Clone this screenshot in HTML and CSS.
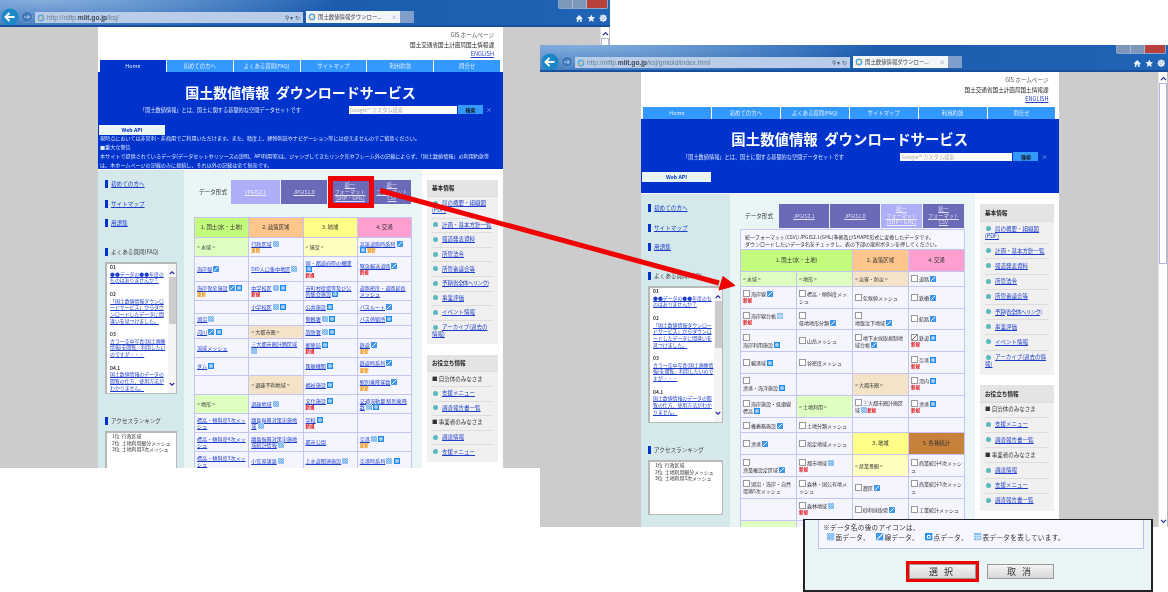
FILE: index.html
```html
<!DOCTYPE html>
<html lang="ja">
<head>
    <meta charset="UTF-8">
    <title>国土数値情報 ダウンロードサービス</title>
    <link rel="stylesheet" href="styles.css">
</head>
<body>
    <svg class="defs" width="0" height="0">
        <symbol id="i-a" viewBox="0 0 8 8"><rect width="8" height="8" fill="#6fb1ee"/><path d="M0 2L2 0M0 5L5 0M0 8L8 0M3 8L8 3M6 8L8 6" stroke="#d8ecff" stroke-width="1"/></symbol>
        <symbol id="i-l" viewBox="0 0 8 8"><rect width="8" height="8" fill="#3f97ea"/><path d="M1 7L7 1" stroke="#fff" stroke-width="1.2"/></symbol>
        <symbol id="i-p" viewBox="0 0 8 8"><rect width="8" height="8" fill="#1f8df0"/><rect x="2" y="2" width="4" height="4" fill="#fff"/><rect x="3.2" y="3.2" width="1.6" height="1.6" fill="#1f6fd0"/></symbol>
        <symbol id="i-t" viewBox="0 0 8 8"><rect width="8" height="8" fill="#7fbcf0"/><path d="M0 2.5H8M0 5H8M3 2.5V8M5.5 2.5V8" stroke="#e4f2ff" stroke-width=".8"/></symbol>
        <symbol id="chev-up" viewBox="0 0 8 6"><path d="M1 5L4 2L7 5" fill="none" stroke="#2a2a9a" stroke-width="1.5"/></symbol>
        <symbol id="chev-down" viewBox="0 0 8 6"><path d="M1 1L4 4L7 1" fill="none" stroke="#2a2a9a" stroke-width="1.5"/></symbol>
        <symbol id="i-back" viewBox="0 0 18 18"><circle cx="9" cy="9" r="8.5" fill="#1a87c6"/><path d="M13.5 9H5M8.5 5L4.5 9L8.5 13" fill="none" stroke="#fff" stroke-width="2"/></symbol>
        <symbol id="i-fwd" viewBox="0 0 12 12"><circle cx="6" cy="6" r="5.5" fill="#3f78ba" stroke="#86a8d4" stroke-width=".7"/><path d="M3 6H8.5M6.5 4L8.5 6L6.5 8" fill="none" stroke="#b8d0ec" stroke-width="1"/></symbol>
        <symbol id="i-ie" viewBox="0 0 9 9"><circle cx="4.5" cy="4.5" r="3" fill="none" stroke="#4fa8e8" stroke-width="1.6"/><path d="M.5 7.5C3 7 7 3.5 8.5 1" fill="none" stroke="#eeb53c" stroke-width="1"/></symbol>
        <symbol id="i-home" viewBox="0 0 9 9"><path d="M4.5 1L8.5 5H7V8.5H5.4V6H3.6V8.5H2V5H.5Z" fill="#e8f0fa"/></symbol>
        <symbol id="i-star" viewBox="0 0 9 9"><path d="M4.5.5L5.7 3.3L8.7 3.5L6.4 5.4L7.1 8.4L4.5 6.8L1.9 8.4L2.6 5.4L.3 3.5L3.3 3.3Z" fill="#e8f0fa"/></symbol>
        <symbol id="i-gear" viewBox="0 0 9 9"><circle cx="4.5" cy="4.5" r="2.6" fill="none" stroke="#e8f0fa" stroke-width="1.6"/><path d="M4.5 .3V8.7M.3 4.5H8.7M1.5 1.5L7.5 7.5M7.5 1.5L1.5 7.5" stroke="#e8f0fa" stroke-width=".9"/></symbol>
    </svg>

    <!-- 奥のウィンドウ -->
    <section class="window win-a">
        <div class="chrome">
            <svg class="btn-back"><use href="#i-back"/></svg>
            <svg class="btn-fwd"><use href="#i-fwd"/></svg>
            <div class="address">
                <svg class="ie-icon"><use href="#i-ie"/></svg>
                <span class="url">http://nlftp.<b>mlit.go.jp</b>/ksj/</span>
                <span class="addr-tools">⚲ ▾ ↻</span>
            </div>
            <div class="tab-active"><svg class="ie-icon"><use href="#i-ie"/></svg><span>国土数値情報ダウンロー...</span><i>×</i></div>
            <div class="tab-new"></div>
            <div class="tools">
                <svg><use href="#i-home"/></svg><svg><use href="#i-star"/></svg><svg><use href="#i-gear"/></svg>
            </div>
            <div class="win-controls"><span></span><span></span><span class="close"></span></div>
        </div>
        <div class="viewport">
            <div class="gutter gutter-left"></div>
            <div class="page">
                <header class="page-head">
                    <div>GIS ホームページ</div>
                    <div class="dark">国土交通省国土計画局国土情報課</div>
                    <div><a href="#">ENGLISH</a></div>
                </header>
                <nav class="site-nav">
                    <span class="on">Home</span><span>初めての方へ</span><span>よくある質問(FAQ)</span><span>サイトマップ</span><span>利用約款</span><span>問合せ</span>
                </nav>
                <div class="banner">
                    <h1>国土数値情報&nbsp; ダウンロードサービス</h1>
                    <div class="banner-row">
                        <p>「国土数値情報」とは、国土に関する基礎的な空間データセットです</p>
                        <div class="search"><span class="search-box">Google™ カスタム検索</span><span class="search-btn">検索</span><span class="search-x">×</span></div>
                    </div>
                    <div class="webapi">Web API</div>
                    <div class="notice">
                        <div>現時点においては非営利・非商用でご利用いただけます。また、精度上、建物判読やナビゲーション等には使えませんのでご留意ください。</div>
                        <div>■重大な警告</div>
                        <div>本サイトで提供されているデータ(データセットやリソースの説明、API利用等)は、ジャンプしてきたリンク先やフレーム外の記載によらず、「国土数値情報」の利用約款等</div>
                        <div>は、本ホームページの記載のみに接続し、それ以外の記載は全て無効です。</div>
                    </div>
                </div>
                <div class="page-body">
                    <aside class="side">
                        <a class="side-link" href="#">初めての方へ</a>
                        <a class="side-link" href="#">サイトマップ</a>
                        <a class="side-link" href="#">用語集</a>
                        <div class="side-head">よくある質問(FAQ)</div>
                        <div class="faq">
                            <div class="faq-text">
                                <b>01</b><br><a href="#">●●データの●●年度のものはありませんか？</a><br><br>
                                <b>02</b><br><a href="#">「国土数値情報ダウンロードサービス」からダウンロードしたデータに間違いを見つけました。</a><br><br>
                                <b>03</b><br><a href="#">カラー空中写真(国土画像情報)を閲覧／利用したいのですが・・・</a><br><br>
                                <b>04.1</b><br><a href="#">国土数値情報のデータの閲覧の仕方、使用方法がわかりません。</a>
                            </div>
                            <div class="faq-scroll">
                                <svg><use href="#chev-up"/></svg><div class="faq-thumb"></div><svg><use href="#chev-down"/></svg>
                            </div>
                        </div>
                        <div class="side-head rank-head">アクセスランキング</div>
                        <div class="rank">
                            <div>1位&nbsp; 行政区域</div>
                            <div>2位&nbsp; 土地利用細分メッシュ</div>
                            <div>3位&nbsp; 土地利用3次メッシュ</div>
                        </div>
                    </aside>
                    <main class="main">
                        <div class="format-row">
                            <span class="format-label">データ形式</span>
                            <div class="format-tabs">
                                <a class="ftab on" href="#">JPGIS2.1</a>
                                <a class="ftab" href="#">JPGIS1.0</a>
                                <a class="ftab" href="#">統一<br>フォーマット<br>(SHP・GML)</a>
                                <a class="ftab" href="#">統一<br>フォーマット<br>CSV</a>
                            </div>
                        </div>
                        <table class="data">
                            <tr class="heads"><td class="h-green">1. 国土(水・土地)</td><td class="h-orange">2. 政策区域</td><td class="h-yellow">3. 地域</td><td class="h-pink">4. 交通</td></tr>
                            <tr><td class="s-green">&lt; 水域 &gt;</td><td><a href="#">行政区域</a> <svg class="ic"><use href="#i-a"/></svg><span class="upd">更新</span></td><td class="s-yellow">&lt; 施設 &gt;</td><td><a href="#">高速道路時系列</a> <svg class="ic"><use href="#i-l"/></svg><br><svg class="ic"><use href="#i-p"/></svg> <span class="upd inl">更新</span></td></tr>
                            <tr><td><a href="#">海岸線</a> <svg class="ic"><use href="#i-l"/></svg></td><td><a href="#">DID人口集中地区</a> <svg class="ic"><use href="#i-a"/></svg></td><td><a href="#">国・都道府県の機関</a> <svg class="ic"><use href="#i-p"/></svg><span class="new">新規</span></td><td><a href="#">緊急輸送道路</a> <svg class="ic"><use href="#i-l"/></svg><span class="new">新規</span></td></tr>
                            <tr><td><a href="#">海岸保全施設</a> <svg class="ic"><use href="#i-l"/></svg> <svg class="ic"><use href="#i-p"/></svg><span class="upd">更新</span></td><td><a href="#">中学校区</a> <svg class="ic"><use href="#i-a"/></svg> <svg class="ic"><use href="#i-p"/></svg><span class="new">新規</span></td><td><a href="#">市町村役場等及び公的集会施設</a> <svg class="ic"><use href="#i-p"/></svg></td><td><a href="#">道路密度・道路延長メッシュ</a></td></tr>
                            <tr><td></td><td><a href="#">小学校区</a> <svg class="ic"><use href="#i-a"/></svg> <svg class="ic"><use href="#i-p"/></svg></td><td><a href="#">公共施設</a> <svg class="ic"><use href="#i-p"/></svg></td><td><a href="#">バスルート</a> <svg class="ic"><use href="#i-l"/></svg></td></tr>
                            <tr><td><a href="#">湖沼</a> <svg class="ic"><use href="#i-a"/></svg></td><td></td><td><a href="#">警察署</a> <svg class="ic"><use href="#i-a"/></svg> <svg class="ic"><use href="#i-p"/></svg></td><td><a href="#">バス停留所</a> <svg class="ic"><use href="#i-p"/></svg></td></tr>
                            <tr><td><a href="#">河川</a> <svg class="ic"><use href="#i-l"/></svg> <svg class="ic"><use href="#i-p"/></svg></td><td class="s-tan">&lt; 大都市圏 &gt;</td><td><a href="#">消防署</a> <svg class="ic"><use href="#i-a"/></svg> <svg class="ic"><use href="#i-p"/></svg></td><td></td></tr>
                            <tr><td><a href="#">流域メッシュ</a></td><td><a href="#">三大都市圏計画区域</a> <svg class="ic"><use href="#i-a"/></svg></td><td><a href="#">郵便局</a> <svg class="ic"><use href="#i-p"/></svg><span class="new">新規</span></td><td><a href="#">鉄道</a> <svg class="ic"><use href="#i-l"/></svg><span class="upd">更新</span></td></tr>
                            <tr class="tall"><td><a href="#">ダム</a> <svg class="ic"><use href="#i-p"/></svg></td><td></td><td><a href="#">医療機関</a> <svg class="ic"><use href="#i-p"/></svg></td><td><a href="#">鉄道時系列</a> <svg class="ic"><use href="#i-l"/></svg><span class="upd">更新</span></td></tr>
                            <tr class="tall"><td></td><td class="s-tan">&lt; 過疎不利地域 &gt;</td><td><a href="#">福祉施設</a> <svg class="ic"><use href="#i-p"/></svg></td><td><a href="#">駅別乗降客数</a> <svg class="ic"><use href="#i-l"/></svg><span class="upd">更新</span></td></tr>
                            <tr class="tall"><td class="s-green">&lt; 地形 &gt;</td><td><a href="#">過疎地域</a> <svg class="ic"><use href="#i-a"/></svg></td><td><a href="#">文化施設</a> <svg class="ic"><use href="#i-p"/></svg><span class="new">新規</span></td><td><a href="#">交通流動量 駅別乗降数</a> <svg class="ic"><use href="#i-a"/></svg> <svg class="ic"><use href="#i-p"/></svg></td></tr>
                            <tr class="tall"><td><a href="#">標高・傾斜度5次メッシュ</a></td><td><a href="#">離島振興対策実施地域</a> <svg class="ic"><use href="#i-a"/></svg></td><td><a href="#">学校</a> <svg class="ic"><use href="#i-p"/></svg><span class="new">新規</span></td><td></td></tr>
                            <tr class="tall"><td><a href="#">標高・傾斜度4次メッシュ</a></td><td><a href="#">離島振興対策実施地域統計情報</a> <svg class="ic"><use href="#i-a"/></svg></td><td><a href="#">都市公園</a></td><td><a href="#">空港</a> <svg class="ic"><use href="#i-a"/></svg> <svg class="ic"><use href="#i-p"/></svg><span class="upd">更新</span></td></tr>
                            <tr class="tall"><td><a href="#">標高・傾斜度3次メッシュ</a></td><td><a href="#">小笠原諸島</a> <svg class="ic"><use href="#i-a"/></svg></td><td><a href="#">上水道関連施設</a> <svg class="ic"><use href="#i-a"/></svg></td><td><a href="#">空港時系列</a> <svg class="ic"><use href="#i-a"/></svg> <svg class="ic"><use href="#i-p"/></svg></td></tr>
                        </table>
                    </main>
                    <aside class="info">
                        <div class="info-box">
                            <h3>基本情報</h3>
                            <ul>
                                <li><a href="#">局の概要・組織図(PDF)</a></li>
                                <li><a href="#">計画・基本方針一覧</a></li>
                                <li><a href="#">報道発表資料</a></li>
                                <li><a href="#">所管法令</a></li>
                                <li><a href="#">所管審議会等</a></li>
                                <li class="tight"><a href="#">予算(省全体へリンク)</a></li>
                                <li><a href="#">事業評価</a></li>
                                <li><a href="#">イベント情報</a></li>
                                <li><a href="#">アーカイブ(過去の情報)</a></li>
                            </ul>
                        </div>
                        <div class="info-box">
                            <h3>お役立ち情報</h3>
                            <ul>
                                <li class="plain">■ 自治体のみなさま</li>
                                <li><a href="#">支援メニュー</a></li>
                                <li><a href="#">調査報告書一覧</a></li>
                                <li class="plain">■ 事業者のみなさま</li>
                                <li><a href="#">調達情報</a></li>
                                <li><a href="#">支援メニュー</a></li>
                            </ul>
                        </div>
                    </aside>
                </div>
            </div>
            <div class="gutter"></div>
            <div class="scrollbar">
                <svg><use href="#chev-up"/></svg><div class="thumb"></div><svg><use href="#chev-down"/></svg>
            </div>
        </div>
    </section>

    <!-- 手前のウィンドウ -->
    <section class="window win-b">
        <div class="chrome">
            <svg class="btn-back"><use href="#i-back"/></svg>
            <svg class="btn-fwd"><use href="#i-fwd"/></svg>
            <div class="address">
                <svg class="ie-icon"><use href="#i-ie"/></svg>
                <span class="url">http://nlftp.<b>mlit.go.jp</b>/ksj/gmlold/index.html</span>
                <span class="addr-tools">⚲ ▾ ↻</span>
            </div>
            <div class="tab-active"><svg class="ie-icon"><use href="#i-ie"/></svg><span>国土数値情報ダウンロー...</span><i>×</i></div>
            <div class="tab-new"></div>
            <div class="tools">
                <svg><use href="#i-home"/></svg><svg><use href="#i-star"/></svg><svg><use href="#i-gear"/></svg>
            </div>
            <div class="win-controls"><span></span><span></span><span class="close"></span></div>
        </div>
        <div class="viewport">
            <div class="gutter gutter-left"></div>
            <div class="page">
                <header class="page-head">
                    <div>GIS ホームページ</div>
                    <div class="dark">国土交通省国土計画局国土情報課</div>
                    <div><a href="#">ENGLISH</a></div>
                </header>
                <nav class="site-nav">
                    <span>Home</span><span>初めての方へ</span><span>よくある質問(FAQ)</span><span>サイトマップ</span><span>利用約款</span><span>問合せ</span>
                </nav>
                <div class="banner">
                    <h1>国土数値情報&nbsp; ダウンロードサービス</h1>
                    <div class="banner-row">
                        <p>「国土数値情報」とは、国土に関する基礎的な空間データセットです</p>
                        <div class="search"><span class="search-box">Google™ カスタム検索</span><span class="search-btn">検索</span><span class="search-x">×</span></div>
                    </div>
                    <div class="webapi">Web API</div>
                </div>
                <div class="page-body">
                    <aside class="side">
                        <a class="side-link" href="#">初めての方へ</a>
                        <a class="side-link" href="#">サイトマップ</a>
                        <a class="side-link" href="#">用語集</a>
                        <div class="side-head">よくある質問(FAQ)</div>
                        <div class="faq">
                            <div class="faq-text">
                                <b>01</b><br><a href="#">●●データの●●年度のものはありませんか？</a><br><br>
                                <b>02</b><br><a href="#">「国土数値情報ダウンロードサービス」からダウンロードしたデータに間違いを見つけました。</a><br><br>
                                <b>03</b><br><a href="#">カラー空中写真(国土画像情報)を閲覧／利用したいのですが・・・</a><br><br>
                                <b>04.1</b><br><a href="#">国土数値情報のデータの閲覧の仕方、使用方法がわかりません。</a>
                            </div>
                            <div class="faq-scroll">
                                <svg><use href="#chev-up"/></svg><div class="faq-thumb"></div><svg><use href="#chev-down"/></svg>
                            </div>
                        </div>
                        <div class="side-head rank-head">アクセスランキング</div>
                        <div class="rank">
                            <div>1位&nbsp; 行政区域</div>
                            <div>2位&nbsp; 土地利用細分メッシュ</div>
                            <div>3位&nbsp; 土地利用3次メッシュ</div>
                        </div>
                    </aside>
                    <main class="main">
                        <div class="format-row">
                            <span class="format-label">データ形式</span>
                            <div class="format-tabs">
                                <a class="ftab" href="#">JPGIS2.1</a>
                                <a class="ftab" href="#">JPGIS1.0</a>
                                <a class="ftab on" href="#">統一<br>フォーマット<br>(SHP・GML)</a>
                                <a class="ftab" href="#">統一<br>フォーマット<br>CSV</a>
                            </div>
                        </div>
                        <div class="format-note">
                            統一フォーマット(CSV)/JPGIS2.1(GML)準拠及びSHAPE形式に変換したデータです。<br>
                            ダウンロードしたいデータ名をチェックし、表の下部の選択ボタンを押してください。
                        </div>
                        <table class="data check">
                            <tr class="heads"><td class="h-green" colspan="2">1. 国土(水・土地)</td><td class="h-orange">2. 政策区域</td><td class="h-pink">4. 交通</td></tr>
                            <tr><td class="s-green">&lt; 水域 &gt;</td><td class="s-green">&lt; 地形 &gt;</td><td class="s-tan">&lt; 災害・防災 &gt;</td><td><i class="cb"></i> 道路 <svg class="ic"><use href="#i-l"/></svg></td></tr>
                            <tr><td><i class="cb"></i> 海岸線 <svg class="ic"><use href="#i-l"/></svg><span class="new">新規</span></td><td><i class="cb"></i> 標高・傾斜度メッシュ</td><td><i class="cb"></i> 気候値メッシュ</td><td><i class="cb"></i> 鉄橋 <svg class="ic"><use href="#i-l"/></svg></td></tr>
                            <tr><td><i class="cb"></i> 海岸線台帳 <svg class="ic"><use href="#i-t"/></svg><span class="new">新規</span></td><td><i class="cb"></i><br>低地地形分類 <svg class="ic"><use href="#i-l"/></svg></td><td><i class="cb"></i><br>地盤沈下地域 <svg class="ic"><use href="#i-l"/></svg></td><td><i class="cb"></i> 航路 <svg class="ic"><use href="#i-l"/></svg></td></tr>
                            <tr><td><i class="cb"></i><br>海岸利用施設 <svg class="ic"><use href="#i-p"/></svg></td><td><i class="cb"></i> 山岳メッシュ</td><td><i class="cb"></i> 地下水採取規制地域台帳 <svg class="ic"><use href="#i-l"/></svg></td><td><i class="cb on"></i> 鉄道 <svg class="ic"><use href="#i-p"/></svg><span class="new">新規</span></td></tr>
                            <tr><td><i class="cb"></i> 輸港域 <svg class="ic"><use href="#i-p"/></svg></td><td><i class="cb"></i> 谷密度メッシュ</td><td></td><td><i class="cb"></i> 空港 <svg class="ic"><use href="#i-p"/></svg><span class="new">新規</span></td></tr>
                            <tr><td><i class="cb"></i><br>漁港・海洋施設 <svg class="ic"><use href="#i-p"/></svg></td><td></td><td class="s-tan">&lt; 大都市圏 &gt;</td><td><i class="cb"></i> 湾内 <svg class="ic"><use href="#i-p"/></svg><span class="new">新規</span></td></tr>
                            <tr><td><i class="cb"></i> 海岸施設・低潮線標高 <svg class="ic"><use href="#i-p"/></svg></td><td class="s-green">&lt; 土地利用 &gt;</td><td><i class="cb"></i> 三大都市圏計画区域 <svg class="ic"><use href="#i-a"/></svg><span class="new inl">新規</span></td><td><i class="cb"></i> 漁港 <svg class="ic"><use href="#i-p"/></svg><span class="new">新規</span></td></tr>
                            <tr><td><i class="cb"></i> 権義務施設 <svg class="ic"><use href="#i-l"/></svg></td><td><i class="cb"></i> 土地分類メッシュ</td><td></td><td></td></tr>
                            <tr class="subheads"><td><i class="cb"></i> 漁港 <svg class="ic"><use href="#i-l"/></svg></td><td><i class="cb"></i> 指定地域メッシュ</td><td class="h-yellow">3. 地域</td><td class="h-brown">5. 各種統計</td></tr>
                            <tr><td><i class="cb"></i><br>漁業権設定区域 <svg class="ic"><use href="#i-l"/></svg></td><td><i class="cb"></i> 都市地域 <svg class="ic"><use href="#i-a"/></svg><span class="new">新規</span></td><td class="s-yellow">&lt; 産業景観 &gt;</td><td><i class="cb"></i> 商業統計4次メッシュ</td></tr>
                            <tr><td><i class="cb"></i> 湖沼・海岸・自然環境5次メッシュ</td><td><i class="cb"></i> 森林・国公有地メッシュ</td><td><i class="cb"></i> 農区 <svg class="ic"><use href="#i-l"/></svg></td><td><i class="cb"></i> 商業統計3次メッシュ</td></tr>
                            <tr><td></td><td><i class="cb"></i> 森林地域 <svg class="ic"><use href="#i-a"/></svg><span class="new">新規</span></td><td><i class="cb"></i> 砂利採取場 <svg class="ic"><use href="#i-l"/></svg></td><td><i class="cb"></i> 工業統計メッシュ</td></tr>
                            <tr><td class="s-green"></td><td></td><td></td><td></td></tr>
                        </table>
                    </main>
                    <aside class="info">
                        <div class="info-box">
                            <h3>基本情報</h3>
                            <ul>
                                <li><a href="#">局の概要・組織図(PDF)</a></li>
                                <li><a href="#">計画・基本方針一覧</a></li>
                                <li><a href="#">報道発表資料</a></li>
                                <li><a href="#">所管法令</a></li>
                                <li><a href="#">所管審議会等</a></li>
                                <li class="tight"><a href="#">予算(省全体へリンク)</a></li>
                                <li><a href="#">事業評価</a></li>
                                <li><a href="#">イベント情報</a></li>
                                <li><a href="#">アーカイブ(過去の情報)</a></li>
                            </ul>
                        </div>
                        <div class="info-box">
                            <h3>お役立ち情報</h3>
                            <ul>
                                <li class="plain">■ 自治体のみなさま</li>
                                <li><a href="#">支援メニュー</a></li>
                                <li><a href="#">調査報告書一覧</a></li>
                                <li class="plain">■ 事業者のみなさま</li>
                                <li><a href="#">調達情報</a></li>
                                <li><a href="#">支援メニュー</a></li>
                                <li><a href="#">調査報告書一覧</a></li>
                            </ul>
                        </div>
                    </aside>
                </div>
            </div>
            <div class="gutter"></div>
            <div class="scrollbar">
                <svg><use href="#chev-up"/></svg><div class="thumb"></div><svg><use href="#chev-down"/></svg>
            </div>
        </div>
    </section>

    <!-- 注釈 -->
    <div class="callout"></div>
    <svg class="arrow" width="1168" height="592" viewBox="0 0 1168 592">
        <path d="M380 190.5L719 283" stroke="#f00000" stroke-width="5"/>
        <path d="M735 285.5L723 276.5L719 290Z" fill="#f00000" stroke="#f00000" stroke-width="1"/>
    </svg>

    <div class="dialog">
        <div class="dialog-note">
            <div>※データ名の後のアイコンは、</div>
            <div class="legend">
                <span><svg class="lg"><use href="#i-a"/></svg>面データ、</span>
                <span><svg class="lg"><use href="#i-l"/></svg>線データ、</span>
                <span><svg class="lg"><use href="#i-p"/></svg>点データ、</span>
                <span><svg class="lg"><use href="#i-t"/></svg>表データを表しています。</span>
            </div>
        </div>
        <div class="dialog-btns">
            <button class="dbtn hot">選 択</button>
            <button class="dbtn">取 消</button>
        </div>
    </div>
</body>
</html>
```

FILE: styles.css
```css
* {
    margin: 0;
    padding: 0;
    box-sizing: border-box;
}

body {
    position: relative;
    width: 1168px;
    height: 592px;
    overflow: hidden;
    background: #fff;
    font-family: "Noto Sans CJK JP", "Liberation Sans", sans-serif;
    color: #333;
}

a {
    color: #1f3fc8;
}

.defs {
    position: absolute;
}

/* browser windows */
.window {
    position: absolute;
    overflow: hidden;
    filter: blur(.4px);
}

.win-a {
    left: 0;
    top: 0;
    width: 610px;
    height: 468px;
}

.win-b {
    left: 540px;
    top: 45px;
    width: 628px;
    height: 482px;
}

.chrome {
    position: relative;
    display: flex;
    align-items: flex-end;
    height: 27px;
    padding: 0 0 2px 1px;
    background: radial-gradient(ellipse 300px 30px at 40px 0, #86aedd, rgba(134, 174, 221, 0) 100%), linear-gradient(90deg, #3a76bd, #1b5cae 55%, #2064b6);
    border-bottom: 2px solid #174f9c;
}

.btn-back {
    width: 18px;
    height: 18px;
    flex: none;
    margin-bottom: -3px;
}

.btn-fwd {
    width: 12px;
    height: 12px;
    flex: none;
    margin: 0 2px 0 2px;
}

.address {
    display: flex;
    align-items: center;
    height: 11px;
    padding: 0 3px 0 2px;
    background: #b9cde8;
    font-size: 6.6px;
    color: #6b7f98;
    font-family: "Liberation Sans", sans-serif;
    flex: none;
}

.win-a .address {
    width: 268px;
}

.win-b .address {
    width: 275px;
}

.url b {
    color: #3c4656;
    font-weight: bold;
}

.ie-icon {
    width: 8px;
    height: 8px;
    flex: none;
    margin-right: 2px;
}

.addr-tools {
    margin-left: auto;
    color: #44566e;
    font-size: 6px;
}

.tab-active {
    display: flex;
    align-items: center;
    flex: none;
    height: 12px;
    margin-left: 3px;
    padding: 0 3px 0 2px;
    background: #f2f5fa;
    font-size: 5.4px;
    color: #444;
}

.win-a .tab-active {
    width: 94px;
}

.win-b .tab-active {
    width: 95px;
}

.tab-active i {
    margin-left: auto;
    font-style: normal;
    color: #7f8fa8;
}

.tab-new {
    width: 14px;
    height: 12px;
    flex: none;
    background: #7f9fca;
}

.tools {
    display: flex;
    gap: 3.5px;
    margin-left: auto;
    margin-right: 3px;
    padding-bottom: 1px;
}

.tools svg {
    width: 8.5px;
    height: 8.5px;
}

.win-controls {
    position: absolute;
    top: 0;
    right: 2px;
    display: flex;
    width: 50px;
    height: 9px;
    border: 1px solid #8aa6cc;
    border-top: 0;
    border-radius: 0 0 2px 2px;
    background: #7d97b8;
}

.win-controls span {
    flex: 1;
    border-right: 1px solid #a8bcd6;
}

.win-controls .close {
    flex: 1.6;
    border: 0;
    background: #b8413c;
}

.viewport {
    display: flex;
    height: calc(100% - 27px);
    background: #ccc;
}

.gutter {
    flex: 1;
}

.win-a .gutter-left {
    flex: none;
    width: 98px;
}

.win-b .gutter-left {
    flex: none;
    width: 101px;
}

.page {
    flex: none;
    overflow: hidden;
    background: #fff;
}

.win-a .page {
    width: 405px;
}

.win-b .page {
    width: 417.5px;
}

.scrollbar {
    flex: none;
    display: flex;
    flex-direction: column;
    align-items: center;
    width: 10px;
    padding: 4px 0 3px;
    background: #fff;
    border-left: 1px solid #e0e0e0;
    border-right: 1px solid #bbb;
}

.scrollbar svg {
    width: 7px;
    height: 5px;
    flex: none;
}

.thumb {
    width: 8px;
    height: 181px;
    margin: 2px 0 auto;
    background: #fff;
    border: 1px solid #b4b4dc;
}

/* page header */
.page-head {
    height: 33px;
    padding: 4px 9px 0 0;
    text-align: right;
    font-size: 5.6px;
    line-height: 9.5px;
    color: #555;
}

.win-b .page-head {
    height: 35px;
    padding-right: 10px;
}

.page-head .dark {
    color: #222;
}

.site-nav {
    display: grid;
    grid-template-columns: repeat(6, 1fr);
    gap: 1px;
    height: 12px;
    margin: 0 3px 0 2px;
}

.site-nav span {
    background: #3399ff;
    color: #dcecff;
    font-size: 5.4px;
    line-height: 12px;
    text-align: center;
}

.site-nav .on {
    background: #0033cc;
}

.banner {
    background: #0033cc;
    color: #dfe8ff;
    padding-top: 13px;
}

.win-a .banner {
    height: 97px;
}

.win-b .banner {
    height: 74px;
}

.banner h1 {
    font-size: 14px;
    line-height: 14px;
    font-weight: bold;
    color: #fff;
    text-align: center;
    white-space: nowrap;
}

.win-b .banner h1 {
    font-size: 14.4px;
}

.banner-row {
    display: flex;
    align-items: center;
    height: 9px;
    margin-top: 6px;
    padding-left: 42px;
    font-size: 5.2px;
    white-space: nowrap;
}

.search {
    display: flex;
    align-items: center;
    margin-left: auto;
    margin-right: 11px;
}

.search-box {
    width: 108px;
    height: 8px;
    padding-left: 1px;
    background: #fff;
    color: #aaa;
    font-size: 5.2px;
    line-height: 8px;
}

.win-b .search-box {
    width: 112px;
}

.search-btn {
    width: 25px;
    height: 9px;
    margin-left: 1px;
    background: #3399ff;
    color: #111;
    font-size: 5px;
    font-weight: bold;
    line-height: 9px;
    text-align: center;
}

.search-x {
    margin-left: 3px;
    color: #9fb2e8;
    font-size: 6px;
}

.webapi {
    width: 66px;
    height: 9.5px;
    margin: 11px 0 0 1px;
    background: #eaf5f5;
    color: #0033cc;
    font-size: 5.2px;
    font-weight: bold;
    line-height: 9.5px;
    text-align: center;
}

.win-b .webapi {
    width: 69px;
}

.notice {
    margin-top: -2px;
    padding-left: 2px;
    font-size: 5.1px;
    line-height: 9px;
    white-space: nowrap;
}

/* three columns */
.page-body {
    display: grid;
    border-top: 1px solid #fff;
}

.win-a .page-body {
    grid-template-columns: 86px 238px 81px;
}

.win-b .page-body {
    grid-template-columns: 89px 245px 83.5px;
}

.side {
    display: flex;
    flex-direction: column;
    align-items: flex-start;
    padding: 10px 0 0 7px;
    background: #d5e9ec;
}

.side-link,
.side-head {
    display: block;
    height: 8px;
    margin-bottom: 11.5px;
    padding-left: 3px;
    border-left: 3px solid #0033cc;
    font-size: 5.6px;
    line-height: 8px;
    white-space: nowrap;
}

.side-head {
    margin: 9.5px 0 6px;
    color: #444;
}

.rank-head {
    margin-top: 23px;
}

.faq,
.rank {
    display: flex;
    width: 72px;
    background: #fff;
    border: 2px solid #b8b8b8;
    border-width: 2px 1px 1px 2px;
    overflow: hidden;
    font-size: 4.9px;
    line-height: 6.7px;
}

.faq {
    height: 132px;
}

.win-b .faq {
    width: 75px;
    height: 137px;
}

.faq-text {
    flex: 1;
    padding: 0 0 0 3px;
}

.faq-text b {
    color: #333;
}

.faq-scroll {
    flex: none;
    display: flex;
    flex-direction: column;
    align-items: center;
    width: 8px;
    padding: 6px 0 6px;
    background: #f4f4f4;
}

.faq-scroll svg {
    width: 6px;
    height: 5px;
    flex: none;
}

.faq-thumb {
    width: 7px;
    height: 47px;
    margin: 2px 0 auto;
    background: #ccc;
}

.rank {
    display: block;
    height: 60px;
    padding: 0 0 0 5px;
    color: #333;
}

.win-b .rank {
    width: 75px;
    height: 55px;
}

.main {
    padding: 10px 0 0 10px;
    background: #eaf5f5;
}

.format-row {
    display: flex;
    align-items: center;
    height: 24px;
}

.format-label {
    width: 37px;
    padding-left: 5px;
    font-size: 5.6px;
    color: #333;
    white-space: nowrap;
}

.win-b .format-label {
    width: 39px;
}

.format-tabs {
    display: grid;
    height: 24px;
    gap: 0;
}

.win-a .format-tabs {
    grid-template-columns: 50px 47px 45px 39px;
}

.win-b .format-tabs {
    grid-template-columns: 51px 51px 42px 42px;
}

.ftab {
    display: flex;
    align-items: center;
    justify-content: center;
    margin-right: 1px;
    background: #6a6ab8;
    color: #dfdffa;
    font-size: 5.2px;
    line-height: 6.5px;
    text-align: center;
    white-space: nowrap;
}

.ftab.on {
    background: #aeaef8;
    color: #eeeeff;
}

.format-note {
    width: 225px;
    height: 20px;
    margin-top: 1px;
    padding: 3px 0 0 4px;
    background: #f6f6ff;
    border: 1px solid #c8c8f8;
    border-bottom: 0;
    font-size: 5px;
    line-height: 7px;
    color: #333;
    white-space: nowrap;
}

/* data tables */
.data {
    table-layout: fixed;
    border-collapse: collapse;
    width: 218px;
    margin-top: 13px;
    background: #f5f5ff;
    font-size: 5.1px;
    line-height: 6.4px;
}

.data td {
    padding: 2.6px 2px;
    border: 1px solid #c5c5f5;
    vertical-align: middle;
}

.data a {
    text-decoration: underline;
}

.heads td,
.subheads .h-yellow,
.subheads .h-brown {
    height: 20px;
    text-align: center;
    font-size: 5.4px;
    color: #333;
}

.h-green { background: #c3fb7c; }
.h-orange { background: #ffc68c; }
.h-yellow { background: #ffff88; }
.h-pink { background: #ff9fd0; }
.h-brown { background: #c8813a; }
.s-green { background: #deffc0; }
.s-yellow { background: #ffffc0; }
.s-tan { background: #f5e3c8; }

.ic {
    width: 6px;
    height: 6px;
    vertical-align: -1px;
}

.new,
.upd {
    display: block;
    font-size: 4.4px;
    line-height: 6px;
    font-weight: bold;
}

.new { color: #e01010; }
.upd { color: #f09000; }

.inl {
    display: inline-block;
}

.data.check {
    width: 225px;
    margin-top: 0;
    line-height: 7px;
    font-size: 5px;
}

.data.check td {
    padding: 3.4px 2px;
}

.data.check .heads td,
.data.check .subheads .h-yellow,
.data.check .subheads .h-brown {
    height: 22px;
}

.data.check .new {
    line-height: 7px;
}

.cb {
    display: inline-block;
    width: 7px;
    height: 7px;
    background: #fff;
    border: 1px solid #999;
    vertical-align: top;
}

.cb.on {
    background: linear-gradient(135deg, #fff 45%, #555 45%, #555 55%, #fff 55%);
}

/* right column */
.info {
    padding: 10px 5px 0;
    background: #fff;
}

.info-box {
    margin-bottom: 11px;
    padding-bottom: 3px;
    background: #f0f0f0;
}

.win-b .info-box {
    margin-bottom: 10px;
}

.info-box h3 {
    height: 17px;
    padding-left: 5px;
    background: #e4e4e4;
    border-bottom: 1px solid #ddd;
    color: #222;
    font-size: 5.6px;
    line-height: 17px;
}

.win-b .info-box h3 {
    height: 18px;
    line-height: 18px;
}

.info-box ul {
    list-style: none;
    padding: 0 5px;
}

.info-box li {
    padding: 3.3px 0;
    border-bottom: 1px solid #ddd;
    font-size: 5.5px;
    line-height: 7px;
}

.win-b .info-box li {
    padding: 3.6px 0;
}

.info-box li:last-child {
    border-bottom: 0;
}

.info-box li:not(.plain)::before {
    content: "";
    display: inline-block;
    width: 5px;
    height: 5px;
    margin: 0 4px 0 1px;
    border-radius: 50%;
    background: #5cb8bc;
    vertical-align: -.5px;
}

.info-box .tight {
    letter-spacing: -.6px;
    white-space: nowrap;
}

.info-box .plain {
    color: #333;
}

/* annotations */
.callout {
    position: absolute;
    left: 328px;
    top: 176px;
    width: 46px;
    height: 32px;
    border: 5px solid #f00000;
}

.arrow {
    position: absolute;
    left: 0;
    top: 0;
    pointer-events: none;
}

.dialog {
    position: absolute;
    left: 803px;
    top: 519px;
    width: 350px;
    height: 73px;
    padding: 0 7px 0 13px;
    background: #eaf5f5;
    border: 2px solid #222;
    border-top-width: 1.5px;
    filter: blur(.25px);
}

.dialog-note {
    height: 29px;
    padding: 2px 0 0 4px;
    background: #f6f6ff;
    border: 1px solid #bcbcf4;
    border-top: 0;
    font-size: 6.6px;
    line-height: 10px;
    letter-spacing: .35px;
    color: #333;
}

.legend {
    display: flex;
    padding-left: 4px;
}

.legend span {
    display: flex;
    align-items: center;
    width: 49px;
    white-space: nowrap;
}

.lg {
    width: 7.5px;
    height: 7.5px;
    flex: none;
    margin-right: 1px;
}

.dialog-btns {
    display: flex;
    justify-content: center;
    gap: 11px;
    margin-top: 15px;
}

.dbtn {
    width: 67px;
    height: 15px;
    border: 1px solid #999;
    background: linear-gradient(#f4f4f4, #d8d8d8);
    color: #333;
    font-family: inherit;
    font-size: 9px;
    line-height: 13px;
    letter-spacing: 2px;
}

.dbtn.hot {
    outline: 3.5px solid #f00000;
}
```
